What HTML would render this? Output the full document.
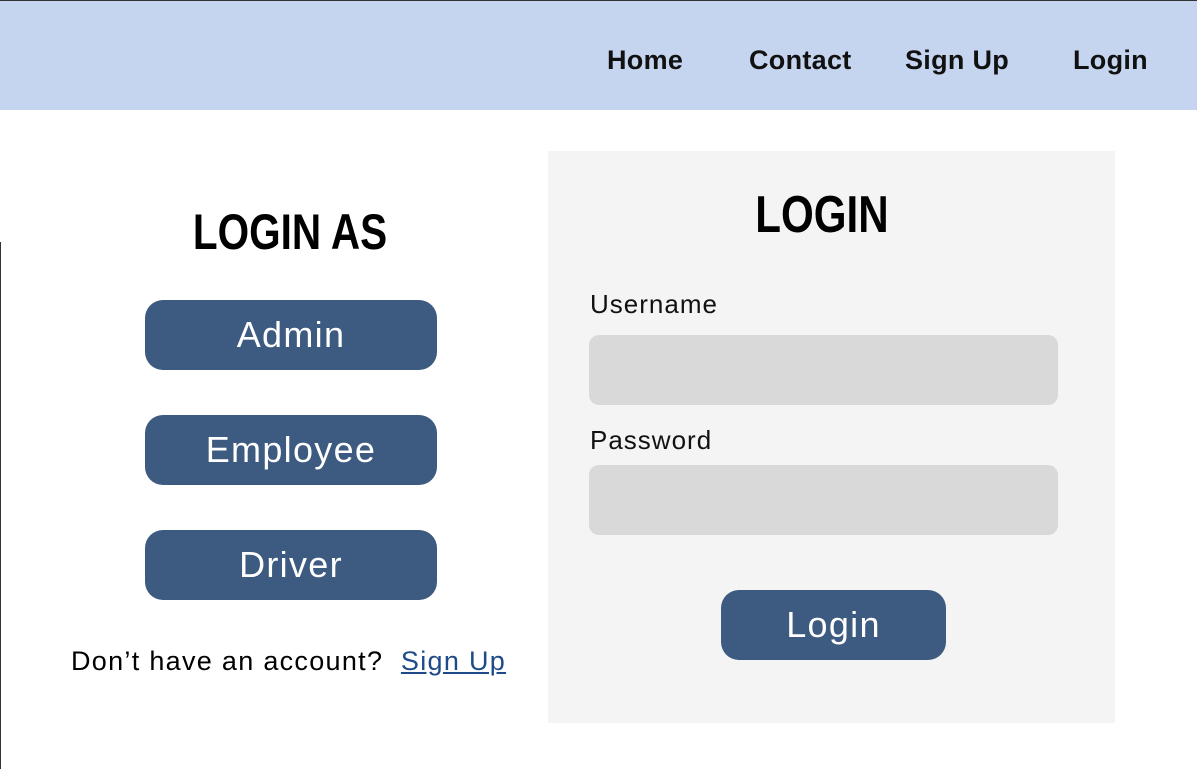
<!DOCTYPE html>
<html><head><style>
*{margin:0;padding:0;box-sizing:border-box}
body{width:1197px;height:769px;position:relative;background:#fff;font-family:"Liberation Sans",sans-serif;overflow:hidden}
.a{position:absolute}
.nav{left:0;top:0;width:1197px;height:110px;background:#c5d5f0;border-top:1px solid #333}
.ni{top:42px;font-size:27px;color:#111;font-weight:bold;line-height:36px;letter-spacing:0.3px}
.title{color:#000;font-weight:bold;transform:scaleX(0.81);transform-origin:center;text-align:center;white-space:nowrap}
.btn{background:#3d5a80;border-radius:18px;color:#fff;font-size:36px;text-align:center;line-height:70px;letter-spacing:1.3px}
.inp{background:#d9d9d9;border-radius:10px;left:589px;width:469px;height:70px}
.lbl{font-size:26px;color:#111;letter-spacing:1px}
</style></head><body>
<div class="a nav"></div>
<div class="a ni" style="left:607px">Home</div>
<div class="a ni" style="left:749px">Contact</div>
<div class="a ni" style="left:905px">Sign Up</div>
<div class="a ni" style="left:1073px">Login</div>
<div class="a" style="left:0;top:242px;width:1px;height:527px;background:#333"></div>
<div class="a" style="left:548px;top:151px;width:567px;height:572px;background:#f4f4f4"></div>
<div class="a title" style="left:140px;width:300px;top:204px;font-size:50px;line-height:56px">LOGIN AS</div>
<div class="a title" style="left:672px;width:300px;top:186px;font-size:52px;line-height:58px">LOGIN</div>
<div class="a btn" style="left:145px;top:300px;width:292px;height:70px">Admin</div>
<div class="a btn" style="left:145px;top:415px;width:292px;height:70px">Employee</div>
<div class="a btn" style="left:145px;top:530px;width:292px;height:70px">Driver</div>
<div class="a" style="left:71px;top:644px;font-size:27px;line-height:34px;color:#000;letter-spacing:1.3px;white-space:nowrap">Don’t have an account?&nbsp; <span style="color:#1f4a8a;text-decoration:underline">Sign Up</span></div>
<div class="a lbl" style="left:590px;top:289px">Username</div>
<div class="a inp" style="top:335px"></div>
<div class="a lbl" style="left:590px;top:425px">Password</div>
<div class="a inp" style="top:465px"></div>
<div class="a btn" style="left:721px;top:590px;width:225px;height:70px">Login</div>
</body></html>
